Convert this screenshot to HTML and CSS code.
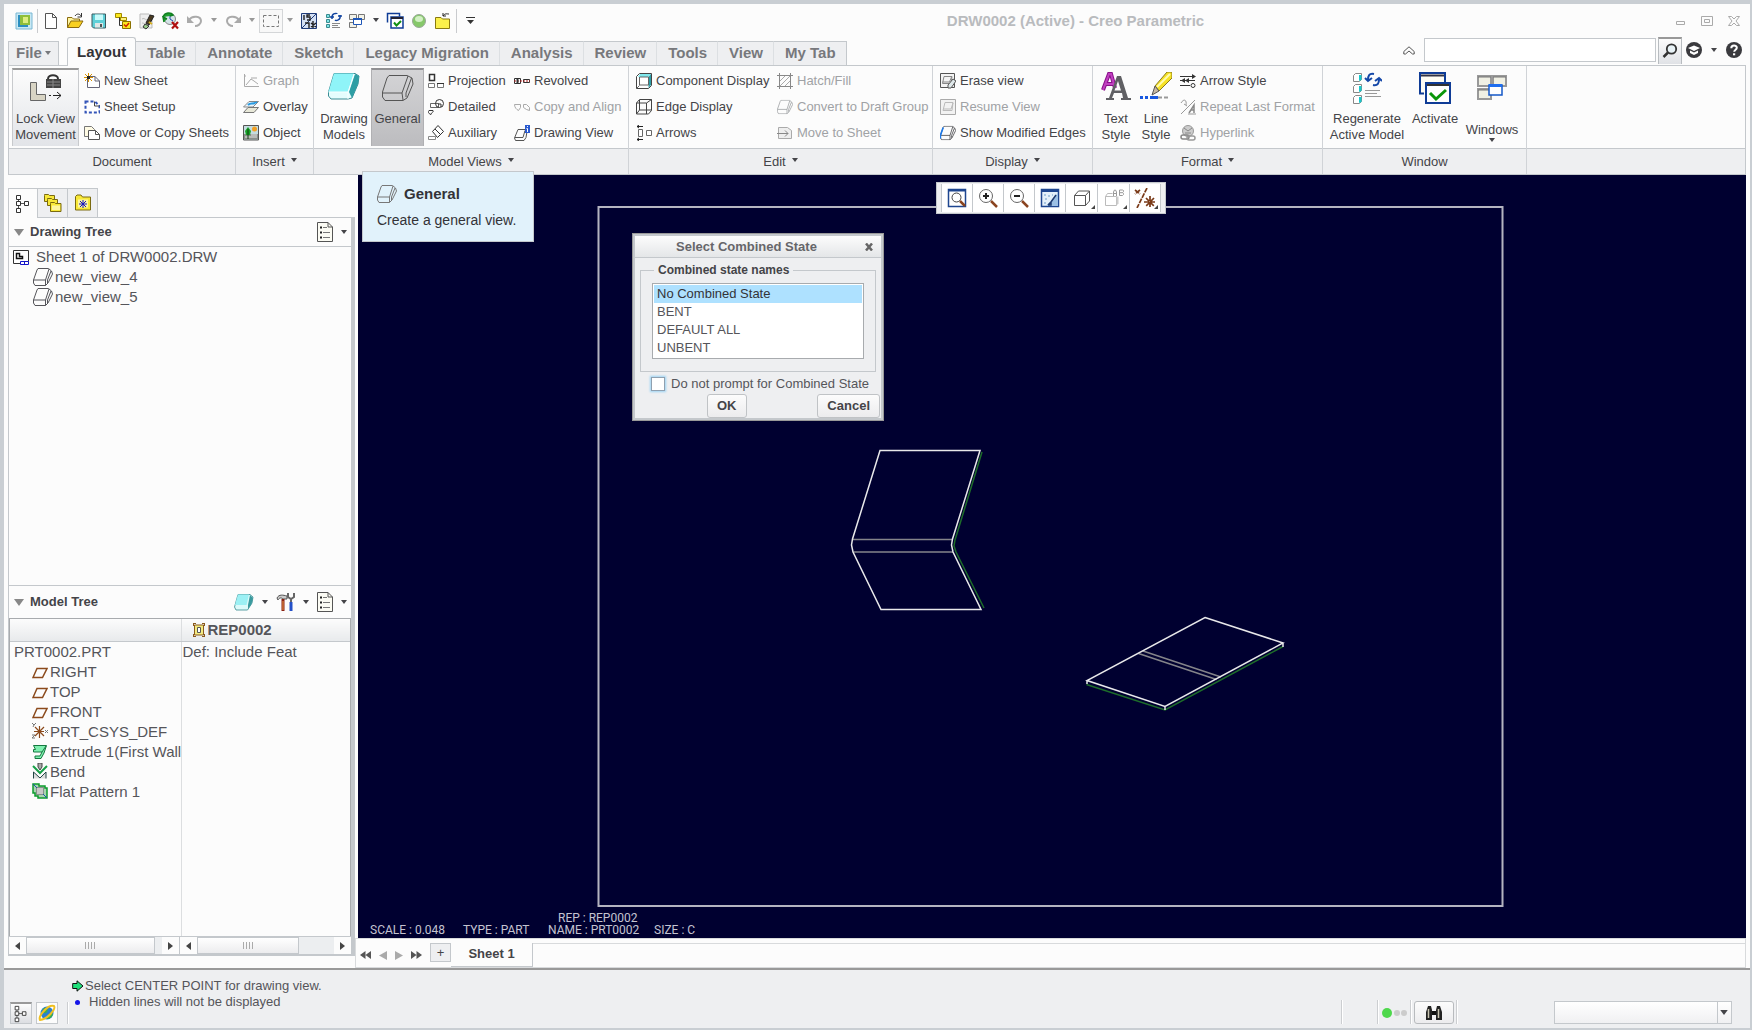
FILE: index.html
```html
<!DOCTYPE html>
<html lang="en">
<head>
<meta charset="utf-8">
<title>DRW0002 (Active) - Creo Parametric</title>
<link rel="stylesheet" href="styles.css">
</head>
<body>
<svg class="sprite" aria-hidden="true">
  <symbol id="caret" viewBox="0 0 6 4"><path d="M0 0h6L3 4z" fill="currentColor"/></symbol>
  <symbol id="part" viewBox="0 0 20 18"><path d="M5 .5H15.5L18.5 3 19.500 6 15 15 12.500 17.500H2L.5 15V12L4 2zM.5 12H12.500V17.500M12.500 12 16 1M14.500 15V12L18 3" fill="none" stroke="currentColor"/></symbol>
  <symbol id="list" viewBox="0 0 16 20"><path d="M.5.5H11L15.500 5V19.500H.5z" fill="#fcfcf4" stroke="#555"/><path d="M11 .5V5H15.500" fill="none" stroke="#555"/><path d="M3 5.500h2M3 10.500h2M3 15.500h2" stroke="#222" stroke-width="2"/><path d="M6 5.500h4M6 10.500h7M6 15.500h7" stroke="#777"/></symbol>
  <symbol id="tree" viewBox="0 0 14 20"><path d="M2.500 5v10M4 9.500h6" stroke="#555" fill="none"/><path d="M.5 1.500h4v4h-4zM.5 7.500h4v4h-4zM.5 14.500h4v4h-4zM8.500 7.500h4v4h-4z" fill="#fff" stroke="#333"/></symbol>
  <symbol id="plane" viewBox="0 0 16 12"><path d="M5 1.500H15L10.500 10.500H1z" fill="none" stroke="#8b4a1c" stroke-width="1.500"/></symbol>
</svg>

<div class="app">
  <header class="titlebar">
    <div class="quick">
      <button aria-label="Application"><svg width="18" height="18" viewBox="0 0 18 18"><path d="M1 1h16v16H1z" fill="#c8e8f4" stroke="#7ab8d4"/><path d="M3 3h10v12H3z" fill="#2b8fc0"/><path d="M5 3h10v10H5z" fill="#8fbf3a"/><path d="M8 5h5v6H8z" fill="#dcee80"/></svg></button>
      <span class="sep"></span>
      <button aria-label="New"><svg width="14" height="18" viewBox="0 0 14 18"><path d="M1.500 1.500H8.500L12.500 5.500V16.500H1.500zM8.500 1.500V5.500H12.500" fill="#fff" stroke="#555"/></svg></button>
      <button aria-label="Open"><svg width="18" height="18" viewBox="0 0 18 18"><path d="M1.500 15.500V5.500H6L7.500 7H13.500V9" fill="#fff6a0" stroke="#8a6a10"/><path d="M1.500 15.500 5 9H17L13 15.500z" fill="#f8d020" stroke="#8a6a10"/><path d="M9 4c2-3 5-2 6 0M15.500 1v4h-4" fill="none" stroke="#333"/></svg></button>
      <button aria-label="Save"><svg width="16" height="16" viewBox="0 0 16 16"><path d="M1 1h13.500v14H2.500L1 13.500z" fill="#5fd0d8" stroke="#3a5a60"/><path d="M4 1.500h8V7H4z" fill="#c8fafa"/><path d="M4 10h8v4.500H4z" fill="#dfe6e6"/><path d="M9 11h2v3H9z" fill="#555"/></svg></button>
      <button aria-label="Checked save"><svg width="18" height="18" viewBox="0 0 18 18"><path d="M1.500 1.500h6v4h-6z" fill="#fbe71c" stroke="#a08a00"/><path d="M5.500 5.500v8H8M5.500 8.500H10" fill="none" stroke="#333"/><path d="M6.500 5.500h6v3h-6z" fill="#fff17a" stroke="#a08a00"/><path d="M8.500 9.500h8v7h-8z" fill="#fbe71c" stroke="#8a7000"/><path d="M10 12.500l2 2 3-3.500" fill="none" stroke="#d02000" stroke-width="1.500"/></svg></button>
      <button aria-label="Erase"><svg width="18" height="18" viewBox="0 0 18 18"><path d="M2 2h9l3 3v11H2z" fill="#eee" stroke="#bbb"/><path d="M4 7c3-2 4 3 8 0M4 11c2 0 4 2 5 0" fill="none" stroke="#bbb"/><path d="M12 3l4 1-5 9-3-2z" fill="#4a3a20" stroke="#222"/><path d="M7 12l4 2-3 3-3-2z" fill="#9c8" stroke="#333"/><path d="M11 10l3 2" stroke="#d8b020" stroke-width="2"/></svg></button>
      <button aria-label="Delete versions"><svg width="18" height="18" viewBox="0 0 18 18"><circle cx="8" cy="7" r="5.500" fill="#d4e4e8" stroke="#888"/><path d="M8 3v4l3 2" stroke="#2244aa" fill="none"/><path d="M1 5c2-5 8-5 10-2L8 4M2 10 1 5 5 7" fill="#20a030" stroke="#108020" stroke-width="1.500"/><path d="M10 10l6 6.500M16 10l-6 6.500" stroke="#b01010" stroke-width="2.200"/></svg></button>
      <button aria-label="Undo"><svg width="18" height="14" viewBox="0 0 18 14"><path d="M3 6C6 1 15 2 15 7c0 3-3 5-6 5" fill="none" stroke="#aaa" stroke-width="2"/><path d="M1 2v7h7z" fill="#aaa"/></svg></button>
      <button class="drop dim" aria-label="Undo list"><svg width="6" height="4"><use href="#caret"/></svg></button>
      <button aria-label="Redo"><svg width="18" height="14" viewBox="0 0 18 14"><path d="M15 6C12 1 3 2 3 7c0 3 3 5 6 5" fill="none" stroke="#aaa" stroke-width="2"/><path d="M17 2v7h-7z" fill="#aaa"/></svg></button>
      <button class="drop dim" aria-label="Redo list"><svg width="6" height="4"><use href="#caret"/></svg></button>
      <button class="boxed" aria-label="Select"><svg width="16" height="12" viewBox="0 0 16 12"><path d="M.5.5h15v11H.5z" fill="none" stroke="#777" stroke-dasharray="3 2"/></svg></button>
      <button class="drop dim" aria-label="Select options"><svg width="6" height="4"><use href="#caret"/></svg></button>
      <button aria-label="Switch dimensions"><svg width="16" height="16" viewBox="0 0 16 16"><path d="M.5.5h15v15H.5z" fill="#d4e0f4" stroke="#1f3b78"/><path d="M1 15 15 1" stroke="#1f3b78"/><path d="M3 2v5M9 2H6v2h3v3H6M4 10h4v5M12 8v7M10 10l5 4M15 10l-5 4" stroke="#222" fill="none" stroke-width="1.400"/></svg></button>
      <button aria-label="Regenerate"><svg width="18" height="18" viewBox="0 0 18 18"><path d="M2.500 2.500h3v3h-3zM2.500 7.500h3v3h-3zM2.500 12.500h3v3h-3z" fill="#7fe6e6" stroke="#3a8a90"/><path d="M8 5c0-4 5-4 5-3M16 4c1 4-4 5-5 4M6 5h4M14 4h4M8 4v3M16 3v3" stroke="#1244a0" stroke-width="1.500" fill="none"/><path d="M8 11.500h8M8 13.500h6M8 15.500h8" stroke="#888"/></svg></button>
      <button aria-label="Windows"><svg width="18" height="16" viewBox="0 0 18 16"><path d="M1.500 1.500h7v5h-7zM10.500 1.500h6v5h-6zM1.500 9.500h7v5h-7z" fill="#f2f2e8" stroke="#777"/><path d="M5.500 5.500h8v6h-8z" fill="#fff" stroke="#1e56b8"/><path d="M5 6h9" stroke="#1e56b8" stroke-width="2"/></svg></button>
      <button class="drop" aria-label="Window list"><svg width="6" height="4"><use href="#caret"/></svg></button>
      <button aria-label="Activate"><svg width="18" height="18" viewBox="0 0 18 18"><path d="M1.500 10.500v-9h12v3" fill="none" stroke="#0f3c96" stroke-width="1.500"/><path d="M5 5h12v11H5z" fill="#fff" stroke="#0f3c96" stroke-width="1.500"/><path d="M5 6h12" stroke="#223" stroke-width="2"/><path d="M8 10.500l2.500 3L15 9" fill="none" stroke="#129012" stroke-width="2"/></svg></button>
      <button aria-label="Status"><svg width="16" height="16" viewBox="0 0 16 16"><circle cx="8" cy="8" r="6.500" fill="#86c86a" stroke="#9aa89a"/><ellipse cx="8" cy="6" rx="4" ry="3" fill="#d2f0c4"/></svg></button>
      <button aria-label="Close"><svg width="18" height="18" viewBox="0 0 18 18"><path d="M1.500 5.500H7L8.500 7H15.500V16.500H1.500z" fill="#fbf04a" stroke="#8a7a10"/><path d="M9 4c2-3 4-2 6-2M9 1v3h3" fill="none" stroke="#222"/></svg></button>
      <span class="sep"></span>
      <button class="drop wide" aria-label="Customize toolbar"><svg width="9" height="8" viewBox="0 0 9 8"><path d="M0 .5h9" stroke="#333"/><path d="M1 3h7L4.500 7z" fill="#333"/></svg></button>
    </div>
    <h1 class="caption">DRW0002 (Active) - Creo Parametric</h1>
    <div class="winbtns">
      <button aria-label="Minimize"><svg width="11" height="11" viewBox="0 0 11 11"><path d="M1.500 6.500h8v3h-8z" fill="none" stroke="#aaa"/></svg></button>
      <button aria-label="Maximize"><svg width="12" height="10" viewBox="0 0 12 10"><path d="M.5.5h11v9H.5zM3.500 3.500h5v3h-5z" fill="none" stroke="#aaa"/></svg></button>
      <button aria-label="Close window"><svg width="12" height="10" viewBox="0 0 12 10"><path d="M.5.5h3L6 3 8.500.5h3L8 5l3.500 4.500h-3L6 7 3.500 9.500h-3L4 5z" fill="none" stroke="#aaa"/></svg></button>
    </div>
  </header>

  <nav class="tabs">
    <button class="tab file">File <svg width="6" height="4"><use href="#caret"/></svg></button>
    <button class="tab on">Layout</button>
    <button class="tab">Table</button>
    <button class="tab">Annotate</button>
    <button class="tab">Sketch</button>
    <button class="tab">Legacy Migration</button>
    <button class="tab">Analysis</button>
    <button class="tab">Review</button>
    <button class="tab">Tools</button>
    <button class="tab">View</button>
    <button class="tab last">My Tab</button>
    <div class="search">
      <button class="icon" aria-label="Collapse ribbon"><svg width="12" height="9" viewBox="0 0 12 9"><path d="M.8 5.500 6 .8l5.200 4.700v2.500H9.500L6 5 2.500 8H.8z" fill="none" stroke="#555"/></svg></button>
      <input type="text" aria-label="Search commands">
      <button class="find" aria-label="Search"><svg width="16" height="16" viewBox="0 0 16 16"><circle cx="9.500" cy="6" r="4.700" fill="#e8f2f6" stroke="#333" stroke-width="1.800"/><path d="M6 9.500 1.500 14" stroke="#333" stroke-width="2.500"/></svg></button>
      <button class="icon" aria-label="Learning"><svg width="16" height="16" viewBox="0 0 16 16"><circle cx="8" cy="8" r="8" fill="#3a3a3e"/><path d="M2 6l6-2.500L14 6 8 9z" fill="#fff"/><path d="M4 8.500v2.500l4 2 4-2V8.500l-4 2z" fill="#fff"/></svg></button>
      <button class="icon" aria-label="Learning menu"><svg width="6" height="4"><use href="#caret"/></svg></button>
      <button class="icon" aria-label="Help"><svg width="16" height="16" viewBox="0 0 16 16"><circle cx="8" cy="8" r="8" fill="#3a3a3e"/><path d="M5.300 6.200c0-3.500 5.500-3.300 5.500-.4 0 1.900-2.600 1.900-2.600 4" fill="none" stroke="#fff" stroke-width="2"/><path d="M7 11.300h2.200v2H7z" fill="#fff"/></svg></button>
    </div>
  </nav>

  <div class="ribbon">
    <section class="group g-doc">
      <div class="body">
        <button class="big lock"><svg width="32" height="28" viewBox="0 0 32 28"><path d="M.5 8.500h6v12h9v6H.5z" fill="#d8d4c4" stroke="#666"/><path d="M18 5c0-5 10-5 10 0" fill="none" stroke="#333" stroke-width="2"/><path d="M16 5h15v9H16z" fill="#444"/><path d="M17 8h13M17 11h13M23 5v9" stroke="#888"/><path d="M19 21.500h2M23 21.500h8M27 18l4 3.500-4 3.500" stroke="#222" fill="none"/></svg><span>Lock View Movement</span></button>
        <div class="col">
          <button><svg width="16" height="16" viewBox="0 0 16 16"><path d="M3.500 3.500H11L15.500 8V14.500H3.500z" fill="#fff" stroke="#667"/><path d="M11 3.500V8H15.500" fill="none" stroke="#667"/><path d="M0 4.500h9M4.500 0v9M1 1l7 7M8 1 1 8" stroke="#d89000"/><path d="M3 3h3v3H3z" fill="#222"/></svg>New Sheet</button>
          <button><svg width="16" height="16" viewBox="0 0 16 16"><path d="M1.500 2.500H11L15.500 7V13.500H1.500z" fill="#fff" stroke="#3455b8" stroke-width="2" stroke-dasharray="3 2"/><path d="M10.500 2.500V7H15.500" fill="none" stroke="#444"/></svg>Sheet Setup</button>
          <button><svg width="16" height="16" viewBox="0 0 16 16"><path d="M.5 1.500h7l3 3v7H.5z" fill="#fffbe4" stroke="#777"/><path d="M4.500 5.500h7l4 4v5h-11z" fill="#fff" stroke="#555"/><path d="M11.500 5.500v4h4" fill="none" stroke="#555"/></svg>Move or Copy Sheets</button>
        </div>
      </div>
      <div class="name">Document</div>
    </section>

    <section class="group g-insert">
      <div class="body">
        <div class="col">
          <button disabled><svg width="16" height="16" viewBox="0 0 16 16"><path d="M1.500 1v12.500H16M1 3h2M3 12l5-6 3 2 4 3M8 5h6" fill="none" stroke="#aaa"/></svg>Graph</button>
          <button><svg width="16" height="16" viewBox="0 0 16 16"><path d="M6 2.500h9.500L10 8H.5z" fill="#eaf4fa" stroke="#888"/><path d="M5 6c3-3 4 0 9-3" stroke="#2a9ae0" stroke-width="2" fill="none"/><path d="M5 8.500h10.500L11 13.500H.5z" fill="#e8e8d8" stroke="#777"/></svg>Overlay</button>
          <button><svg width="16" height="16" viewBox="0 0 16 16"><path d="M.5.5h15v14.500H.5z" fill="#c4dce0" stroke="#555"/><path d="M1 9h14v5.500H1z" fill="#8a8f8a"/><path d="M2 12h12M8 10h6" stroke="#e8e8e8"/><circle cx="11.500" cy="4" r="2.500" fill="#f2a024"/><path d="M5 2l3 4-1 4H3L2 6z" fill="#18a428"/><path d="M5 4v10" stroke="#103c10"/></svg>Object</button>
        </div>
      </div>
      <button class="name">Insert <svg width="6" height="4"><use href="#caret"/></svg></button>
    </section>

    <section class="group g-views">
      <div class="body">
        <button class="big models"><svg width="32" height="28" viewBox="0 0 32 28"><path d="M6 1.500H27L31 4 30 12 24 26 20 27H3L.5 24V20z" fill="#e4fdfd" stroke="#3a8c94"/><path d="M6 1.500H26L20 20H.5z" fill="#8ff4f8"/><path d="M27 2 31 4 30 12 24 26 21 20z" fill="#2e9ea4"/><path d="M.5 20H20L26 2M20 20V27" stroke="#f8ffff" fill="none"/></svg><span>Drawing Models</span></button>
        <button class="big general"><svg width="32" height="28" viewBox="0 0 32 28"><path d="M7 1.500H25L30 4 31 10 25 24 21 26.500H3L.5 23V18L5 4zM.5 19H20L21 26M20 19 26 2M24 23V19L29.500 4" fill="none" stroke="#555"/></svg><span>General</span></button>
        <div class="col first">
          <button><svg width="16" height="16" viewBox="0 0 16 16"><path d="M1.500 1.500h5v6h-5z" fill="#fff" stroke="#333" stroke-width="1.500"/><path d="M.5 10.500h6v4h-6zM9.500 10.500h6v4h-6z" fill="#fff" stroke="#777"/><path d="M9 10.500h7" stroke="#333"/></svg>Projection</button>
          <button><svg width="16" height="16" viewBox="0 0 16 16"><path d="M2.500 4.500h8v4h-8z" fill="#fff" stroke="#666"/><circle cx="11.500" cy="4.500" r="4" fill="none" stroke="#333"/><path d="M10 5h3v3M1 11.500h4c1 2-2 2-2 4-3-1-3-3-2-4z" fill="none" stroke="#333"/></svg>Detailed</button>
          <button><svg width="16" height="16" viewBox="0 0 16 16"><path d="M10 .5l5.500 6-6 6-5-6z" fill="#fff" stroke="#333"/><path d="M7 4l6 6" stroke="#333"/><path d="M.5 11.500h7v3h-7z" fill="#fff" stroke="#888"/></svg>Auxiliary</button>
        </div>
        <div class="col">
          <button><svg width="16" height="16" viewBox="0 0 16 16"><path d="M.5 5.500h6v5h-6zM9.500 6.500h6v3h-6z" fill="#fff" stroke="#333"/><path d="M0 8h16" stroke="#b02020" stroke-dasharray="2 1"/><path d="M3.500 5v6" stroke="#333" stroke-width="2"/></svg>Revolved</button>
          <button disabled><svg width="16" height="16" viewBox="0 0 16 16"><path d="M.5 5.500h6v3l-2 3c-2-1-4-3-4-6zM9.500 5.500h3l3 3v3l-3-1-3-2z" fill="none" stroke="#aaa"/></svg>Copy and Align</button>
          <button><svg width="16" height="16" viewBox="0 0 16 16"><path d="M4 4.500h7l2 2-1 6-2 3H1.500L.5 13zM1 12.500h8l2-7" fill="none" stroke="#555"/><path d="M11 0h5v8h-5z" fill="#2a5ad0"/><path d="M13.500 1v1M12.500 3.500h1V7" stroke="#fff" fill="none"/></svg>Drawing View</button>
        </div>
      </div>
      <button class="name">Model Views <svg width="6" height="4"><use href="#caret"/></svg></button>
    </section>

    <section class="group g-edit">
      <div class="body">
        <div class="col first">
          <button><svg width="16" height="16" viewBox="0 0 16 16"><path d="M.5 3.500l3-3h12v12l-3 3H.5z" fill="#fff" stroke="#444"/><path d="M4 1h11l-3 3H2z" fill="#7fe8ec"/><path d="M12.500 4 15 1v11l-2.500 3z" fill="#2c9ca4"/><path d="M3.500 4v8h9M.5 15.500l3-3M4 4h8.500v8" fill="none" stroke="#666"/></svg>Component Display</button>
          <button><svg width="16" height="16" viewBox="0 0 16 16"><path d="M.5 4l3-3.500h12v11l-3 3.500H.5zM.5 4h10v11M10.500 4l5-3.500M3.500 1v10h12M.5 15l3-4" fill="none" stroke="#444"/></svg>Edge Display</button>
          <button><svg width="16" height="16" viewBox="0 0 16 16"><path d="M2.500 4.500h4v7h-4zM10.500 5.500h5v5h-5z" fill="#fff" stroke="#666"/><path d="M1 1.500h6M1 14.500h6M3 0 1 1.500 3 3M3 13l-2 1.500L3 16" fill="none" stroke="#222"/></svg>Arrows</button>
        </div>
        <div class="col">
          <button disabled><svg width="16" height="16" viewBox="0 0 16 16"><path d="M2.500 0v16M13.500 0v16M0 2.500h16M0 13.500h16" stroke="#888"/><path d="M3 8l5-5M3 13 13 3M8 13l5-5" stroke="#aaa"/></svg>Hatch/Fill</button>
          <button disabled><svg width="16" height="16" viewBox="0 0 20 18"><use href="#part"/></svg>Convert to Draft Group</button>
          <button disabled><svg width="16" height="16" viewBox="0 0 16 16"><path d="M1.500 2.500h9l4 3v8h-13z" fill="#eee" stroke="#aaa"/><path d="M0 8.500h11M8 5.500l3 3-3 3" stroke="#888" fill="none"/></svg>Move to Sheet</button>
        </div>
      </div>
      <button class="name">Edit <svg width="6" height="4"><use href="#caret"/></svg></button>
    </section>

    <section class="group g-display">
      <div class="body">
        <div class="col">
          <button><svg width="16" height="16" viewBox="0 0 16 16"><path d="M.5.5h14v14H.5z" fill="#f4f4f4" stroke="#555"/><path d="M4 3.500h8l-1 7H2.500zM2.500 9h7l2-5" fill="none" stroke="#888"/><path d="M8 12l5-6 3 2-5 7H8z" fill="#dfe8ea" stroke="#555"/></svg>Erase view</button>
          <button disabled><svg width="16" height="16" viewBox="0 0 16 16"><path d="M.5.5h15v15H.5z" fill="#f2f2f2" stroke="#aaa"/><path d="M5 3.500h8l-1 8H3zM3 10h8l2-6" fill="none" stroke="#bbb"/></svg>Resume View</button>
          <button><svg width="16" height="16" viewBox="0 0 20 18"><use href="#part"/><path d="M4 2 .5 12v4" fill="none" stroke="#1c78e8" stroke-width="2"/></svg>Show Modified Edges</button>
        </div>
      </div>
      <button class="name">Display <svg width="6" height="4"><use href="#caret"/></svg></button>
    </section>

    <section class="group g-format">
      <div class="body">
        <button class="big"><svg width="30" height="28" viewBox="0 0 30 28"><path d="M2 18 8 2h2l4 14M4 12h8" fill="none" stroke="#8a108a" stroke-width="4"/><path d="M2 18 8 2h2l4 14M4 12h8" fill="none" stroke="#c040c0" stroke-width="2"/><path d="M16 4h4l7 22h3v2H20v-2h2l-1-5H13l-2 5h2v2H5v-2h3zM17 9l-3.500 9.500H20z" fill="#606064" fill-rule="evenodd"/></svg><span>Text Style</span></button>
        <button class="big"><svg width="32" height="28" viewBox="0 0 32 28"><path d="M15 14 27 0h5v6L19 19z" fill="#f6e224" stroke="#8a7a20"/><path d="M17 15 30 2" stroke="#fffbb0" stroke-width="2"/><path d="M15 14l4 5-7 4z" fill="#c8b8a0" stroke="#555"/><path d="M0 25.500h8" stroke="#1858e0" stroke-width="3" stroke-dasharray="3 2"/><path d="M10 25.500h8" stroke="#1858e0" stroke-width="3"/><path d="M18 25.500h12" stroke="#999" stroke-width="2" stroke-dasharray="4 2"/></svg><span>Line Style</span></button>
        <div class="col">
          <button><svg width="16" height="16" viewBox="0 0 16 16"><path d="M0 3.500h15M0 7.500h15M0 12.500h10" stroke="#333"/><path d="M12 1l4 2.500L12 6zM5 5 1 7.500 5 10zM9 5 5 7.500 9 10z" fill="#333"/><circle cx="13" cy="12.500" r="2" fill="#fff" stroke="#333"/></svg>Arrow Style</button>
          <button disabled><svg width="16" height="16" viewBox="0 0 16 16"><path d="M1 15 15 1M8 15h8M1 4c3-5 6-3 5 2M4 5l3 2" stroke="#999" fill="none"/><path d="M9 14l5-8v8M11 11h3" stroke="#888" fill="none" stroke-width="1.500"/></svg>Repeat Last Format</button>
          <button disabled><svg width="16" height="16" viewBox="0 0 16 16"><circle cx="8" cy="6" r="5.500" fill="#ccc" stroke="#999"/><path d="M4 3l4 3 4-3M5 8h6" stroke="#888" fill="none"/><rect x="1" y="10" width="8" height="4" rx="2" fill="none" stroke="#888" stroke-width="1.500"/><rect x="7" y="11" width="8" height="4" rx="2" fill="none" stroke="#999" stroke-width="1.500"/></svg>Hyperlink</button>
        </div>
      </div>
      <button class="name">Format <svg width="6" height="4"><use href="#caret"/></svg></button>
    </section>

    <section class="group g-window">
      <div class="body">
        <button class="big regen"><svg width="30" height="32" viewBox="0 0 30 32"><g fill="#fff" stroke="#888"><path d="M1.500 3.500l2-2h6v6l-2 2h-6zM1.500 14.500l2-2h6v6l-2 2h-6zM1.500 25.500l2-2h6v6l-2 2h-6z"/></g><path d="M7 3h2.500v5L7 9zM7 14h2.500v5L7 20zM7 25h2.500v5L7 31z" fill="#18c8cc"/><path d="M22 2c-5-1-6 2-6 6M13 6l3 3 4-3M21 13c5 1 6-2 6-6M23 9l4-3 3 3" fill="none" stroke="#1548a8" stroke-width="2"/><path d="M13 18.500h15M13 21.500h12M13 24.500h16" stroke="#999"/></svg><span>Regenerate Active Model</span></button>
        <button class="big act"><svg width="32" height="32" viewBox="0 0 32 32"><path d="M5 21.500H1V1h25v9" fill="#fffdf4" stroke="#0f3c96" stroke-width="2"/><path d="M2 3.500h23" stroke="#334" stroke-width="2"/><path d="M7 11h24v20H7z" fill="#fff" stroke="#0f3c96" stroke-width="2"/><path d="M8 13h22" stroke="#333" stroke-width="2"/><path d="M11 21l6 6 10-9" fill="none" stroke="#0a960a" stroke-width="3"/></svg><span>Activate</span></button>
        <button class="big wins"><svg width="30" height="28" viewBox="0 0 30 28"><path d="M1 4h13v10H1zM16 4h13v10H16zM1 17h13v10H1z" fill="#f0f0e4" stroke="#999" stroke-width="2"/><path d="M1 5h13M16 5h13M1 18h13" stroke="#777"/><path d="M12 13h13v10H12z" fill="#fff" stroke="#1558c8" stroke-width="1.500"/><path d="M12 13.500h13" stroke="#1e6ef0" stroke-width="3"/></svg><span>Windows</span><svg class="below" width="6" height="4"><use href="#caret"/></svg></button>
      </div>
      <div class="name">Window</div>
    </section>
    <section class="group g-rest"><div class="body"></div><div class="name"></div></section>
  </div>

  <div class="work">
    <aside class="side">
      <div class="sidetabs">
        <button class="on" aria-label="Model tree"><svg width="14" height="20"><use href="#tree"/></svg></button>
        <button aria-label="Folder browser"><svg width="18" height="20" viewBox="0 0 18 20"><g fill="#f8e838" stroke="#7a6a10"><path d="M.5 2.500V1.500h4l1 1h5v6H.5z"/><path d="M3.500 6.500V5.500h4l1 1h5v6h-10z"/><path d="M6.500 10.500V9.500h4l1 1h5.500v8H6.500z" /></g><path d="M8 12.500h8v4.500H8z" fill="#fdf6a0"/></svg></button>
        <button aria-label="Favorites"><svg width="18" height="18" viewBox="0 0 18 18"><path d="M1.500 4V2.500L3 1h4l1.500 2h8v13h-15z" fill="#f8e838" stroke="#7a6a10"/><path d="M4 5.500h10v8H4z" fill="#fdf6a0"/><path d="M9 6v8M5 10h8M6 7l6 6M12 7l-6 6" stroke="#1414c0"/></svg></button>
      </div>
      <section class="pane dtree">
        <div class="panehead"><span class="tri"></span><h2>Drawing Tree</h2><button aria-label="Drawing tree settings"><svg width="16" height="20"><use href="#list"/></svg></button><button aria-label="Drawing tree menu"><svg width="6" height="4"><use href="#caret"/></svg></button></div>
        <ul class="tree">
          <li><svg width="16" height="15" viewBox="0 0 16 15"><path d="M.5.5h15v13H.5z" fill="#fff" stroke="#333"/><path d="M3.500 3.500v5h6v-2h-3v-3z" fill="#fff" stroke="#111" stroke-width="1.500"/><path d="M7.500 11.500h8v3h-8zM11.500 11v4" fill="#fff" stroke="#1414c8"/></svg>Sheet 1 of DRW0002.DRW</li>
          <li class="sub"><svg width="20" height="18"><use href="#part"/></svg>new_view_4</li>
          <li class="sub"><svg width="20" height="18"><use href="#part"/></svg>new_view_5</li>
        </ul>
      </section>
      <section class="pane mtree">
        <div class="panehead tall"><span class="tri"></span><h2>Model Tree</h2>
          <button aria-label="Show"><svg width="20" height="18" viewBox="0 0 20 18"><path d="M4 1.500H16L19 4 18 10 13.500 17H2L.5 14z" fill="#dcfafa" stroke="#5aa0a4"/><path d="M4 1.500H15L12.500 12H1z" fill="#9cf0f4"/><path d="M16 2 19 5 17.500 11 14 16V12z" fill="#3a9a9e"/></svg></button><button aria-label="Show menu"><svg width="6" height="4"><use href="#caret"/></svg></button>
          <button aria-label="Tools"><svg width="19" height="20" viewBox="0 0 19 20"><path d="M1 6c2-4 6-3 10-2v3H7C5 5 3 6 2 8z" fill="#ccc" stroke="#555"/><path d="M7 7v12" stroke="#8a2010" stroke-width="3"/><path d="M7 9v9" stroke="#f0a050"/><path d="M12 1v4l3 2 3-2V1M15 6v6" fill="none" stroke="#666" stroke-width="2"/><path d="M15 10v9" stroke="#2450c8" stroke-width="3"/></svg></button><button aria-label="Tools menu"><svg width="6" height="4"><use href="#caret"/></svg></button>
          <button aria-label="Model tree settings"><svg width="16" height="20"><use href="#list"/></svg></button><button aria-label="Model tree menu"><svg width="6" height="4"><use href="#caret"/></svg></button></div>
        <div class="tablewrap">
        <table>
          <thead><tr><th class="c1"></th><th><svg width="12" height="14" viewBox="0 0 12 14"><path d="M1.500 2h9v10h-9z" fill="#f4ea80" stroke="#8a5a1c"/><path d="M0 .5h3M9 .5h3M0 13.500h3M9 13.500h3M.5 0v3M11.500 0v3M.5 11v3M11.500 11v3" stroke="#8a5a1c"/><path d="M4.500 4.500h3v5h-3z" fill="#fff" stroke="#555"/></svg>REP0002</th></tr></thead>
          <tbody>
            <tr><td>PRT0002.PRT</td><td class="def">Def: Include Feat</td></tr>
            <tr><td class="in"><svg width="16" height="12"><use href="#plane"/></svg>RIGHT</td><td></td></tr>
            <tr><td class="in"><svg width="16" height="12"><use href="#plane"/></svg>TOP</td><td></td></tr>
            <tr><td class="in"><svg width="16" height="12"><use href="#plane"/></svg>FRONT</td><td></td></tr>
            <tr><td class="in"><svg width="16" height="16" viewBox="0 0 16 16"><path d="M2 8.500h10M7.500 3v12M3 4l9 9M12 4l-9 9" stroke="#8b4a1c" stroke-width="1.200"/><path d="M0 0l2 2 2-2M2 2 1 4M13 7l3 3M16 7l-3 3M0 12h3l-3 3h3" stroke="#777" fill="none"/></svg>PRT_CSYS_DEF</td><td></td></tr>
            <tr><td class="in"><svg width="16" height="14" viewBox="0 0 16 14"><path d="M1.500.5h13L12 8 9 13.500H3V11h5l2-4H1.500V4.500h2z" fill="#7ff0b0" stroke="#157840"/><path d="M10 7l4-6" stroke="#157840"/></svg>Extrude 1(First Wall</td><td></td></tr>
            <tr><td class="in"><svg width="16" height="16" viewBox="0 0 16 16"><path d="M6 0h4v4L8 7 6 4z" fill="#aaa" stroke="#444"/><path d="M1 3l7 7 7-7" fill="none" stroke="#18a048" stroke-width="2"/><path d="M1.500 15.500V9L8 15l6-6v6.500" fill="#ddd" stroke="#244"/></svg>Bend</td><td></td></tr>
            <tr><td class="in"><svg width="16" height="16" viewBox="0 0 16 16"><path d="M1 1h6v2h6v2h2v10H6v-2H3v-3H1z" fill="#a8d4b0" stroke="#0c9a2c" stroke-width="1.500"/><path d="M4.500 4.500h7v7h-7z" fill="#c8c8c8" stroke="#555" stroke-dasharray="1 1"/><path d="M1 1l4 4M15 15l-4-4" stroke="#1a50b0"/></svg>Flat Pattern 1</td><td></td></tr>
            <tr class="fill"><td></td><td></td></tr>
          </tbody>
        </table>
        </div>
        <div class="scrolls">
          <div class="hscroll a"><button class="arr l" aria-label="Scroll left"></button><span class="thumb"><i></i></span><button class="arr r" aria-label="Scroll right"></button></div>
          <div class="hscroll b"><button class="arr l" aria-label="Scroll left"></button><span class="thumb"><i></i></span><button class="arr r" aria-label="Scroll right"></button></div>
        </div>
      </section>
    </aside>

    <main class="stage">
      <div class="canvas">
        <svg class="drawing" viewBox="358 175 1388 763" fill="none">
          <path d="M598.500 207H1502.500V906H598.500z" stroke="#b4b4c0" stroke-width="2"/>
          <path d="M982 452 955 540 954 546 956 552 984 608" stroke="#1d6c2a" stroke-width="1.500"/>
          <path d="M853 539.500h100M853 552h100" stroke="#84848a" stroke-width="1.500"/>
          <path d="M880 450.500H980L952.500 539 951.500 545 953 552 981 609.500H881L853 552 851.500 545 852.500 539z" stroke="#e8e8ea" stroke-width="1.500"/>
          <path d="M1086.500 684.500 1165 710 1283 646.500" stroke="#1d6c2a" stroke-width="1.500"/>
          <path d="M1143 651 1221 677M1138.500 653.500 1216.500 679.500" stroke="#84848a" stroke-width="1.500"/>
          <path d="M1205 617.500 1283 643 1165 706.500 1087 680.500zM1087 680v4M1165 706v4M1283 643v4" stroke="#e8e8ea" stroke-width="1.500"/>
          <g class="note"><text x="558" y="922">REP : REP0002</text><text x="370" y="934">SCALE : 0.048</text><text x="463" y="934">TYPE : PART</text><text x="548" y="934">NAME : PRT0002</text><text x="654" y="934">SIZE : C</text></g>
        </svg>

        <div class="viewbar">
          <button aria-label="Refit"><svg width="20" height="20" viewBox="0 0 20 20"><path d="M1.500 1.500h17v17h-17z" fill="#fff" stroke="#1e4690" stroke-width="1.500"/><path d="M1 2.500h18" stroke="#1e4690" stroke-width="2"/><circle cx="9.500" cy="9.500" r="4.500" fill="#fff" stroke="#444"/><path d="M13 13l5 5" stroke="#8a4420" stroke-width="2.500"/></svg></button>
          <button aria-label="Zoom in"><svg width="20" height="20" viewBox="0 0 20 20"><circle cx="8" cy="8" r="6.500" fill="#fff" stroke="#666"/><path d="M8 5v6M5 8h6" stroke="#222" stroke-width="2"/><path d="M13 13l6 6" stroke="#8a4420" stroke-width="2.500"/></svg></button>
          <button aria-label="Zoom out"><svg width="20" height="20" viewBox="0 0 20 20"><circle cx="8" cy="8" r="6.500" fill="#fff" stroke="#666"/><path d="M5 8h6" stroke="#222" stroke-width="2"/><path d="M13 13l6 6" stroke="#8a4420" stroke-width="2.500"/></svg></button>
          <button aria-label="Repaint"><svg width="20" height="20" viewBox="0 0 20 20"><path d="M1.500 1.500h17v17h-17z" fill="#e4f0fa" stroke="#1e4690" stroke-width="1.500"/><path d="M1 2.500h18" stroke="#1e4690" stroke-width="3"/><path d="M18 5v13H6z" fill="#9cc0e4"/><path d="M4 7h2M8 8h2M5 11h2M12 7h1M4 15h2" stroke="#6a9ac8"/><path d="M8 17l3-3 5-7M8 17h3v-3" fill="none" stroke="#1e3a70" stroke-width="1.500"/></svg></button>
          <button class="more" aria-label="Display style"><svg width="18" height="18" viewBox="0 0 18 18"><path d="M1.500 6.500h11v10h-11zM1.500 6.500l4-4.500h11l-4 4.500M16.500 2v10l-4 4.500" fill="#fff" stroke="#555"/></svg></button>
          <button class="more" aria-label="Annotation display"><svg width="20" height="18" viewBox="0 0 20 18"><path d="M1.500 7.500l2-3h5M1.500 7.500v9h11v-9z" fill="#fff" stroke="#bbb"/><path d="M12.500 7.500h2v7l-2 2z" fill="#ccc"/><path d="M9.500 7V3l1-2h1l1 2v4M9.500 4.500h3M15.500 1v5.500h3l1-1V4.500l-1-.8 1-1V1.500l-1-.5zM15.500 3.700h3" fill="none" stroke="#999"/></svg></button>
          <button class="more" aria-label="Datum display"><svg width="22" height="20" viewBox="0 0 22 20"><path d="M1 2l5 4M6 2 1 6M13 0 3 20M16 8v12M10 14h12M12 10l8 8M20 10l-8 8" stroke="#7a3a18" stroke-width="1.700" stroke-dasharray="5 1"/></svg></button>
        </div>

        <form class="dialog" aria-label="Select Combined State">
          <div class="dtitle"><span>Select Combined State</span><button type="button" aria-label="Close dialog"><svg width="8" height="8" viewBox="0 0 8 8"><path d="M1 0.500 7 7.500M7 .5 1 7.500" stroke="#666" stroke-width="2.500"/></svg></button></div>
          <fieldset>
            <legend>Combined state names</legend>
            <select size="4" aria-label="Combined state names">
              <option selected>No Combined State</option>
              <option>BENT</option>
              <option>DEFAULT ALL</option>
              <option>UNBENT</option>
            </select>
          </fieldset>
          <label class="check"><input type="checkbox">Do not prompt for Combined State</label>
          <div class="dbtns"><button type="button">OK</button><button type="button">Cancel</button></div>
        </form>

        <div class="tooltip" role="tooltip">
          <strong><svg width="20" height="18"><use href="#part"/></svg>General</strong>
          <p>Create a general view.</p>
        </div>
      </div>

      <div class="sheets">
        <button class="nav first" aria-label="First sheet"><svg width="11" height="8" viewBox="0 0 11 8"><path d="M5.500 0v8L0 4zM11 0v8L5.500 4z" fill="#555"/></svg></button>
        <button class="nav" aria-label="Previous sheet"><svg width="8" height="9" viewBox="0 0 8 9"><path d="M8 0v9L0 4.500z" fill="#aaa"/></svg></button>
        <button class="nav" aria-label="Next sheet"><svg width="8" height="9" viewBox="0 0 8 9"><path d="M0 0v9l8-4.500z" fill="#aaa"/></svg></button>
        <button class="nav" aria-label="Last sheet"><svg width="11" height="8" viewBox="0 0 11 8"><path d="M0 0v8l5.500-4zM5.500 0v8L11 4z" fill="#555"/></svg></button>
        <button class="add" aria-label="Add sheet">+</button>
        <button class="sheet">Sheet 1</button>
        <span class="rest"></span>
      </div>
    </main>
  </div>

  <footer class="status">
    <div class="toggles">
      <button class="pressed" aria-label="Navigator"><svg width="14" height="18"><use href="#tree"/></svg></button>
      <button aria-label="Browser"><svg width="18" height="18" viewBox="0 0 18 18"><circle cx="9" cy="9" r="6.500" fill="#2a80d0"/><path d="M5 5c3-3 6 0 4 3s-5 0-4-3zM9 12c2-3 5-3 6-2-1 4-4 5-6 5z" fill="#3cb048"/><path d="M2 16C0 12 10 0 16 2c2 3-6 13-14 14z" fill="none" stroke="#f0c020" stroke-width="2"/></svg></button>
    </div>
    <span class="bar"></span>
    <div class="messages">
      <p><svg width="12" height="12" viewBox="0 0 12 12"><path d="M.7 3.500H5V.8l6 5.200-6 5.200V8.500H.7z" fill="#1ee07a" stroke="#111"/></svg>Select CENTER POINT for drawing view.</p>
      <p class="second"><i></i>Hidden lines will not be displayed</p>
    </div>
    <span class="bar b1"></span>
    <span class="bar"></span>
    <svg class="lights" width="28" height="12" viewBox="0 0 28 12"><circle cx="6" cy="6" r="5" fill="#4ed84c"/><circle cx="16" cy="6" r="3" fill="#ccc"/><circle cx="23" cy="6" r="3" fill="#ccc"/></svg>
    <span class="bar"></span>
    <button class="binoc" aria-label="Find"><svg width="18" height="16" viewBox="0 0 18 16"><path d="M3 1h3l1 4v10H1V7zM12 1h3l2 6v8h-6V5z" fill="#222"/><path d="M7 6h4v4H7z" fill="#111"/><path d="M3.500 4v9M13.500 4v9" stroke="#c8c4b0" stroke-width="1.500"/></svg></button>
    <span class="bar"></span>
    <div class="filter"><select aria-label="Selection filter"><option></option></select><svg width="8" height="5"><use href="#caret"/></svg></div>
  </footer>
</div>
</body>
</html>
```
FILE: styles.css
```css
* { box-sizing: border-box; }
body { margin: 0; font: 13px/16px "Liberation Sans", Arial, sans-serif; color: #444448; }
button { font: inherit; color: inherit; background: none; border: 0; padding: 0; margin: 0; }
h1, h2, p, ul { margin: 0; padding: 0; }
svg { display: block; flex: none; }
.sprite { position: absolute; width: 0; height: 0; }

.app { height: 100vh; min-height: 700px; display: flex; flex-direction: column; background: #fcfcfc; border: solid #c9ced3; border-width: 4px 2px 2px 4px; }

/* title bar */
.titlebar { height: 33px; flex: none; display: flex; padding: 0 10px 0 8px; align-items: center; }
.quick { display: flex; align-items: center; }
.quick button { width: 24px; height: 24px; display: flex; align-items: center; justify-content: center; }
.quick .drop { width: 14px; padding-bottom: 2px; }
.quick .drop.wide { width: 24px; padding: 0; }
.quick .dim { color: #999; }
.quick .boxed { border: 1px solid #d4d6d8; background: #f8f8f8; }
.sep { width: 1px; height: 24px; margin: 0 1px; background: #c9cbce; }
.caption { flex: 1; padding-right: 6px; text-align: center; font-size: 15px; line-height: 20px; color: #b9bbbe; }
.winbtns { display: flex; gap: 15px; align-items: center; }

/* tabs */
.tabs { height: 28px; flex: none; display: flex; align-items: flex-end; padding: 0 4px; position: relative; }
.tab { height: 24px; padding: 0 10px 2px 11px; font-size: 15px; font-weight: bold; color: #77787c; background: #eeeff1; border-top: 1px solid #c4c8cc; border-right: 1px solid #dcdfe2; white-space: nowrap; }
.tab.file { width: 51px; padding: 0 7px 2px; margin-right: 8px; display: flex; align-items: center; gap: 3px; border: 1px solid #c4c8cc; border-bottom: 0; }
.tab.on { height: 29px; padding: 0 9px; margin-bottom: -1px; color: #333337; background: #fcfcfc; border: 1px solid #c4c8cc; border-bottom: 0; border-radius: 3px 3px 0 0; z-index: 1; }
.tab.last { border-right-color: #c4c8cc; }
.search { margin-left: auto; height: 28px; display: flex; align-items: center; padding: 0 4px 2px 0; }
.search .icon { display: flex; margin-right: 9px; }
.search .icon:last-child { margin-right: 0; }
.search input { width: 232px; height: 24px; margin: 0 2px 0 0; border: 1px solid #c4c8cc; background: #fff; }
.find { width: 24px; height: 27px; margin-right: 4px; display: flex; align-items: center; justify-content: center; border: 1px solid #b8bcc0; border-top: 2px solid #999; border-bottom: 0; background: linear-gradient(#fcfcfc, #e0e2e6); }

/* ribbon */
.ribbon { flex: none; height: 110px; margin: 0 4px; display: grid; grid-template-columns: 227px 78px 315px 304px 160px 230px 204px 1fr; border: 1px solid #c4c8cc; }
.group { display: flex; flex-direction: column; border-right: 1px solid #d0d3d7; min-width: 0; }
.g-rest { border-right: 0; }
.group .body { height: 82px; display: flex; }
.name { flex: 1; width: 100%; display: flex; align-items: center; justify-content: center; gap: 6px; background: #eeeff1; border-top: 1px solid #c4c8cc; }
.name svg { margin-bottom: 3px; }
.col { padding-top: 2px; }
.col button { height: 26px; display: flex; align-items: center; gap: 4px; white-space: nowrap; }
.col button:disabled { color: #a0a2a5; }
.big { width: 40px; height: 78px; margin-top: 2px; padding-top: 4px; display: flex; flex-direction: column; align-items: center; line-height: 16px; }
.big svg { margin-bottom: auto; }
.big span { height: 35px; }
.g-doc .body, .g-format .body { padding-left: 3px; }
.g-insert .body, .g-edit .body, .g-display .body { padding-left: 7px; }
.g-views .body { padding-left: 5px; }
.g-window .body { padding-left: 4px; }
.lock { width: 67px; margin-right: 5px; border: 1px solid #c8cacd; border-top: 2px solid #999; border-bottom: 0; background: linear-gradient(#fcfcfc, #e2e4e8); }
.models { width: 50px; margin-right: 2px; }
.general { width: 53px; margin-right: 4px; border: 1px solid #b0b0b3; border-top: 2px solid #909093; border-bottom: 0; background: linear-gradient(#d4d4d6, #bcbcbf); }
.g-views .first { width: 86px; }
.g-edit .first { width: 141px; }
.g-format .col { padding-left: 4px; }
.regen { width: 80px; }
.act { width: 56px; }
.wins { width: 58px; }
.wins span { height: 16px; }
.wins .below { margin: 0 0 4px; }

/* left side */
.work { flex: 1; min-height: 0; display: flex; margin: 0 4px; }
.side { width: 347px; flex: none; display: flex; flex-direction: column; padding: 13px 0 12px; }
.sidetabs { display: flex; height: 29px; flex: none; }
.sidetabs button { width: 30px; display: flex; align-items: center; justify-content: center; background: #eeeff1; border: 1px solid #c4c8cc; border-width: 1px 1px 0 0; }
.sidetabs .on { background: #fcfcfc; border-left-width: 1px; height: 30px; z-index: 1; }
.pane { display: flex; flex-direction: column; min-height: 0; border: solid #c4c8cc; border-width: 1px 4px 0 1px; }
.dtree { flex: 369 1 0; }
.mtree { flex: 370 1 0; border-bottom-width: 2px; }
.panehead { height: 29px; flex: none; display: flex; align-items: center; gap: 8px; padding: 0 4px 0 5px; }
.panehead.tall { height: 32px; }
.dtree .panehead { border-bottom: 1px solid #c4c8cc; }
.panehead h2 { flex: 1; font-size: 13px; line-height: 16px; }
.tri { border: 5px solid transparent; border-top: 7px solid #888; border-bottom: 0; margin-right: -2px; }
.tree { list-style: none; font-size: 15px; color: #55555a; }
.tree li { height: 20px; display: flex; align-items: center; gap: 7px; padding-left: 4px; }
.tree .sub { gap: 2px; padding-left: 24px; }
.tablewrap { flex: 1; min-height: 0; border: 1px solid #a8abae; border-bottom: 0; overflow: hidden; }
table { width: 100%; height: 100%; border-collapse: collapse; table-layout: fixed; font-size: 15px; line-height: 20px; color: #55555a; }
th { height: 22px; padding: 0 0 0 11px; text-align: left; border-bottom: 1px solid #c4c8cc; border-right: 1px solid #dcdee0; background: linear-gradient(#fcfcfc, #e8eaec); }
th:last-child, td:last-child { border-right: 0; }
th svg { display: inline-block; vertical-align: -2px; margin-right: 3px; }
.c1 { width: 171px; }
td { height: 20px; padding: 0 0 0 4px; border-right: 1px solid #dcdee0; white-space: nowrap; }
td.in { padding-left: 22px; }
td.def { padding-left: 1px; }
td svg { display: inline-block; vertical-align: -2px; margin-right: 2px; }
.fill td { height: auto; }
.scrolls { height: 18px; flex: none; display: flex; border-top: 1px solid #c4c8cc; background: #eceef0; }
.hscroll { display: flex; border-right: 1px solid #c4c8cc; }
.hscroll.a { width: 171px; flex: none; }
.hscroll.b { flex: 1; border-right: 0; }
.arr { width: 17px; display: flex; align-items: center; justify-content: center; background: #fcfcfc; }
.arr::after { content: ""; border: 4px solid transparent; }
.arr.l::after { border-right: 5px solid #444; border-left: 0; }
.arr.r::after { border-left: 5px solid #444; border-right: 0; }
.arr.r { margin-left: auto; }
.thumb { width: 129px; display: flex; align-items: center; justify-content: center; border: 1px solid #c4c8cc; background: linear-gradient(#fff, #ececee); }
.b .thumb { width: 102px; }
.thumb i { width: 11px; height: 7px; background: repeating-linear-gradient(90deg, #aaa 0 1px, transparent 1px 3px); }

/* drawing area */
.stage { flex: 1; min-width: 0; display: flex; flex-direction: column; }
.canvas { flex: 1; min-height: 0; margin-left: 3px; position: relative; background: #000030; }
.drawing { position: absolute; width: 100%; height: 100%; }
.note { font: 12px Roboto, sans-serif; fill: #c4c4d0; }
.viewbar { position: absolute; top: 7px; left: 50%; transform: translateX(-50%); display: flex; height: 32px; margin-left: -1px; padding: 1px 4px; background: #eeeff1; border: 1px solid #c4c8cc; }
.viewbar button { width: 31px; display: flex; align-items: center; justify-content: center; background: #fff; border-left: 1px solid #c4c8cc; position: relative; }
.viewbar button:nth-child(n+5) { width: 32px; }
.viewbar button:last-child { border-right: 1px solid #c4c8cc; }
.more::after { content: ""; position: absolute; right: 2px; bottom: 3px; border: 2px solid #444; border-top-color: transparent; border-left-color: transparent; }

.dialog { position: absolute; left: 274px; top: 58px; width: 252px; height: 188px; background: #eeeff1; border: 3px solid #c4c8cc; outline: 1px solid #999; outline-offset: -1px; }
.dtitle { height: 22px; display: flex; align-items: center; padding: 0 8px 0 41px; font-weight: bold; color: #66666a; background: linear-gradient(#fcfcfc, #e4e6e8); border-bottom: 1px solid #c4c8cc; }
.dtitle span { flex: 1; }
fieldset { height: 110px; margin: 4px 5px 0; padding: 5px 11px 0; border: 1px solid #c4c8cc; }
legend { margin-left: 2px; padding: 0 4px; font-size: 12px; font-weight: bold; line-height: 16px; }
fieldset select { display: block; width: 100%; height: 76px; padding: 1px; overflow: hidden; font: inherit; border: 1px solid #a8abae; border-radius: 0; background: #fff; color: #55555a; outline: 0; }
option { height: 18px; min-height: 18px; padding: 1px 3px; line-height: 16px; }
fieldset option:checked { color: #333337; background: #aee1ff linear-gradient(#aee1ff, #aee1ff); }
.check { height: 22px; display: flex; align-items: center; gap: 6px; padding: 2px 0 0 16px; color: #55555a; white-space: nowrap; }
.check input { appearance: none; width: 14px; height: 14px; margin: 0; border: 1px solid #8fa0b0; background: #fff; box-shadow: 0 0 2px 1px #9cd4f4; }
.dbtns { display: flex; justify-content: space-between; padding: 0 1px 0 72px; }
.dbtns button { height: 24px; padding: 0 9px; font-weight: bold; border: 1px solid #c0c3c6; border-radius: 3px; background: linear-gradient(#fcfcfc, #ececee); }

.tooltip { position: absolute; left: 4px; top: -4px; width: 172px; height: 71px; padding: 12px 14px 0; background: #e1f2fb; border: 1px solid #c4c8cc; color: #333337; font-size: 14px; line-height: 20px; z-index: 2; white-space: nowrap; }
.tooltip strong { display: flex; align-items: center; gap: 7px; font-size: 15px; margin-bottom: 6px; }
.tooltip svg { color: #777; }

.sheets { height: 30px; flex: none; display: flex; align-items: stretch; padding-top: 4px; border: 1px solid #d8dadc; }
.nav { display: flex; align-items: center; margin-right: 8px; }
.nav.first { margin-left: 4px; }
.add { width: 21px; height: 19px; background: #eeeff1; border: 1px solid #c4c8cc; }
.sheet { width: 82px; padding-bottom: 2px; font-weight: bold; border: solid #c4c8cc; border-width: 0 1px 1px 0; }
.rest { flex: 1; border-top: 1px solid #d8dadc; }

/* status bar */
.status { height: 60px; flex: none; display: flex; align-items: flex-end; padding: 0 18px 4px 6px; background: #eeeff1; border-top: 2px solid #999; }
.toggles { display: flex; gap: 4px; }
.toggles button { width: 22px; height: 22px; display: flex; align-items: center; justify-content: center; border: 1px solid #c4c8cc; background: #fcfcfc; }
.toggles .pressed { border-top: 2px solid #999; background: linear-gradient(#fcfcfc, #dcdee2); }
.bar { width: 1px; height: 24px; background: #ccced1; box-shadow: 1px 0 #fff; }
.toggles + .bar { height: 22px; margin-left: 9px; }
.messages { flex: 1; align-self: flex-start; padding: 8px 0 0 4px; color: #55555a; }
.messages p { display: flex; align-items: center; gap: 1px; }
.messages .second { padding-left: 3px; gap: 9px; }
.messages i { width: 5px; height: 5px; border-radius: 50%; background: #1414e8; }
.b1 { margin-right: 35px; }
.lights { margin: 0 1px 5px 3px; }
.binoc { width: 40px; height: 23px; margin: 0 2px 0 3px; display: flex; align-items: center; justify-content: center; border: 1px solid #b8bbbe; border-radius: 3px; background: linear-gradient(#fcfcfc, #ececee); }
.filter { display: flex; align-items: center; margin-left: 97px; height: 23px; position: relative; }
.filter select { appearance: none; width: 178px; height: 23px; border: 1px solid #c4c8cc; border-radius: 0; background: linear-gradient(90deg, transparent 162px, #c4c8cc 162px, #c4c8cc 163px, transparent 163px), linear-gradient(#fff, #f0f0f2); }
.filter svg { position: absolute; right: 4px; top: 9px; pointer-events: none; }
```
